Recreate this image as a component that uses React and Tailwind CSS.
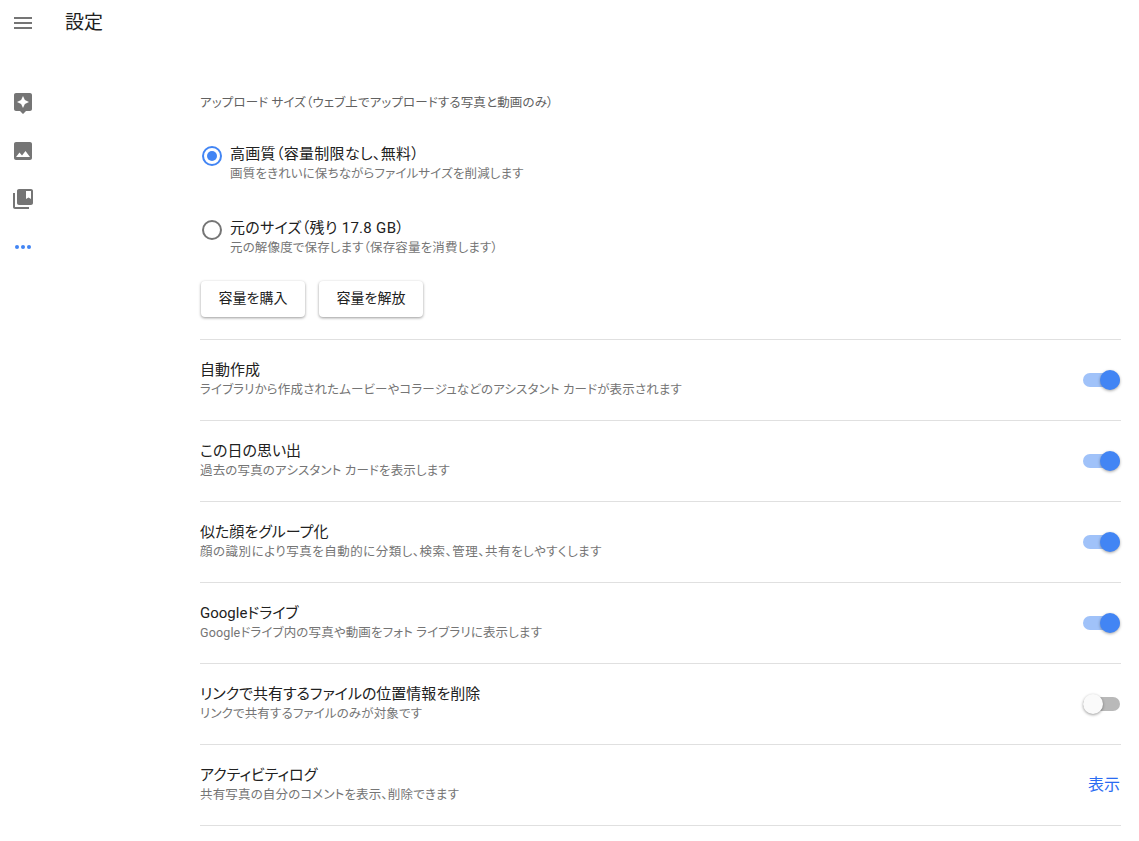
import React from "react";

function Toggle({ on }) {
  return (
    <div className="relative w-[37px] h-3.5 shrink-0">
      <div className={on ? "w-full h-full rounded-full bg-[#a0c2f9]" : "w-full h-full rounded-full bg-[#b9b9b9]"} />
      <div
        className={
          on
            ? "absolute right-0 top-[-3px] w-5 h-5 rounded-full bg-[#4285f4] shadow-[0_1px_3px_rgba(0,0,0,0.35)]"
            : "absolute left-0 top-[-3px] w-5 h-5 rounded-full bg-[#fafafa] shadow-[0_1px_3px_rgba(0,0,0,0.4)]"
        }
      />
    </div>
  );
}

function Row({ title, sub, children }) {
  return (
    <div className="h-[81px] border-b border-[#e0e0e0] flex items-center justify-between pr-px">
      <div>
        <div className="text-[15px] leading-5 text-[#212121]">{title}</div>
        <div className="text-[12.5px] tracking-[0.15px] leading-5 text-[#757575]">{sub}</div>
      </div>
      {children}
    </div>
  );
}

function Radio({ on, title, sub }) {
  return (
    <div className="flex items-start">
      <div
        className={
          on
            ? "w-5 h-5 mt-[3px] ml-[2px] rounded-full border-2 border-[#4285f4] flex items-center justify-center"
            : "w-5 h-5 mt-[3px] ml-[2px] rounded-full border-2 border-[#757575]"
        }
      >
        {on && <div className="w-2.5 h-2.5 rounded-full bg-[#4285f4]" />}
      </div>
      <div className="ml-2">
        <div className="text-[15px] tracking-[0.3px] leading-[22px] text-[#212121]">{title}</div>
        <div className="text-[12.5px] tracking-[0.15px] leading-[18px] text-[#757575]">{sub}</div>
      </div>
    </div>
  );
}

function NavIcon({ children }) {
  return <div className="h-12 flex items-center justify-center text-[#757575]">{children}</div>;
}

export default function App() {
  return (
    <div className="min-h-screen bg-white font-['Roboto','Noto_Sans_CJK_JP',sans-serif] [font-feature-settings:'palt']">
      <header className="h-[46px] flex items-center">
        <div className="w-[46px] flex justify-center text-[#757575]">
          <svg width="24" height="24" viewBox="0 0 24 24" fill="currentColor">
            <path d="M3 18h18v-2H3v2zm0-5h18v-2H3v2zm0-7v2h18V6H3z" />
          </svg>
        </div>
        <h1 className="ml-[19px] text-[19px] text-[#212121]">設定</h1>
      </header>

      <div className="flex">
        <nav className="w-[46px] shrink-0 pt-[33px]">
          <NavIcon>
            <svg width="24" height="24" viewBox="0 0 24 24" fill="currentColor">
              <path d="M19 2H5c-1.100 0-2 .9-2 2v14c0 1.100.9 2 2 2h4l3 3 3-3h4c1.100 0 2-.9 2-2V4c0-1.100-.9-2-2-2zm-5.120 10.880L12 17l-1.880-4.120L6 11l4.120-1.880L12 5l1.880 4.120L18 11l-4.120 1.880z" />
            </svg>
          </NavIcon>
          <NavIcon>
            <svg width="24" height="24" viewBox="0 0 24 24" fill="currentColor">
              <path d="M21 19V5c0-1.100-.9-2-2-2H5c-1.100 0-2 .9-2 2v14c0 1.100.9 2 2 2h14c1.100 0 2-.9 2-2zM8.500 13.500l2.500 3.010L14.500 12l4.500 6H5l3.500-4.500z" />
            </svg>
          </NavIcon>
          <NavIcon>
            <svg width="24" height="24" viewBox="0 0 24 24" fill="currentColor">
              <path d="M4 6H2v14c0 1.100.9 2 2 2h14v-2H4V6zm16-4H8c-1.100 0-2 .9-2 2v12c0 1.100.9 2 2 2h12c1.100 0 2-.9 2-2V4c0-1.100-.9-2-2-2zm0 10l-2.500-1.500L15 12V4h5v8z" />
            </svg>
          </NavIcon>
          <NavIcon>
            <div className="flex gap-[2px]">
              <div className="w-1 h-1 rounded-full bg-[#4285f4]" />
              <div className="w-1 h-1 rounded-full bg-[#4285f4]" />
              <div className="w-1 h-1 rounded-full bg-[#4285f4]" />
            </div>
          </NavIcon>
        </nav>

        <main className="ml-[154px] w-[921px] pt-[47px]">
          <div className="text-[12.5px] tracking-[0.15px] leading-5 text-[#616161]">アップロード サイズ（ウェブ上でアップロードする写真と動画のみ）</div>

          <div className="mt-[30px] flex flex-col gap-[34px]">
            <Radio on title="高画質（容量制限なし、無料）" sub="画質をきれいに保ちながらファイルサイズを削減します" />
            <Radio title="元のサイズ（残り 17.8 GB）" sub="元の解像度で保存します（保存容量を消費します）" />
          </div>

          <div className="mt-6 pb-[22px] border-b border-[#e0e0e0]">
            <div className="flex gap-3.5 ml-px">
              <button className="w-[104px] h-9 pb-0.5 rounded-sm bg-white text-sm text-[#212121] shadow-[0_1px_3px_rgba(0,0,0,0.4)]">容量を購入</button>
              <button className="w-[104px] h-9 pb-0.5 rounded-sm bg-white text-sm text-[#212121] shadow-[0_1px_3px_rgba(0,0,0,0.4)]">容量を解放</button>
            </div>
          </div>

          <Row title="自動作成" sub="ライブラリから作成されたムービーやコラージュなどのアシスタント カードが表示されます"><Toggle on /></Row>
          <Row title="この日の思い出" sub="過去の写真のアシスタント カードを表示します"><Toggle on /></Row>
          <Row
            title="似た顔をグループ化"
            sub={<span className="tracking-[0.5px]">顔の識別により写真を自動的に分類し、検索、管理、共有をしやすくします</span>}
          >
            <Toggle on />
          </Row>
          <Row title="Googleドライブ" sub="Googleドライブ内の写真や動画をフォト ライブラリに表示します"><Toggle on /></Row>
          <Row title="リンクで共有するファイルの位置情報を削除" sub="リンクで共有するファイルのみが対象です"><Toggle /></Row>
          <Row title="アクティビティログ" sub="共有写真の自分のコメントを表示、削除できます">
            <a className="text-base text-[#2a6bf2]">表示</a>
          </Row>
        </main>
      </div>
    </div>
  );
}
